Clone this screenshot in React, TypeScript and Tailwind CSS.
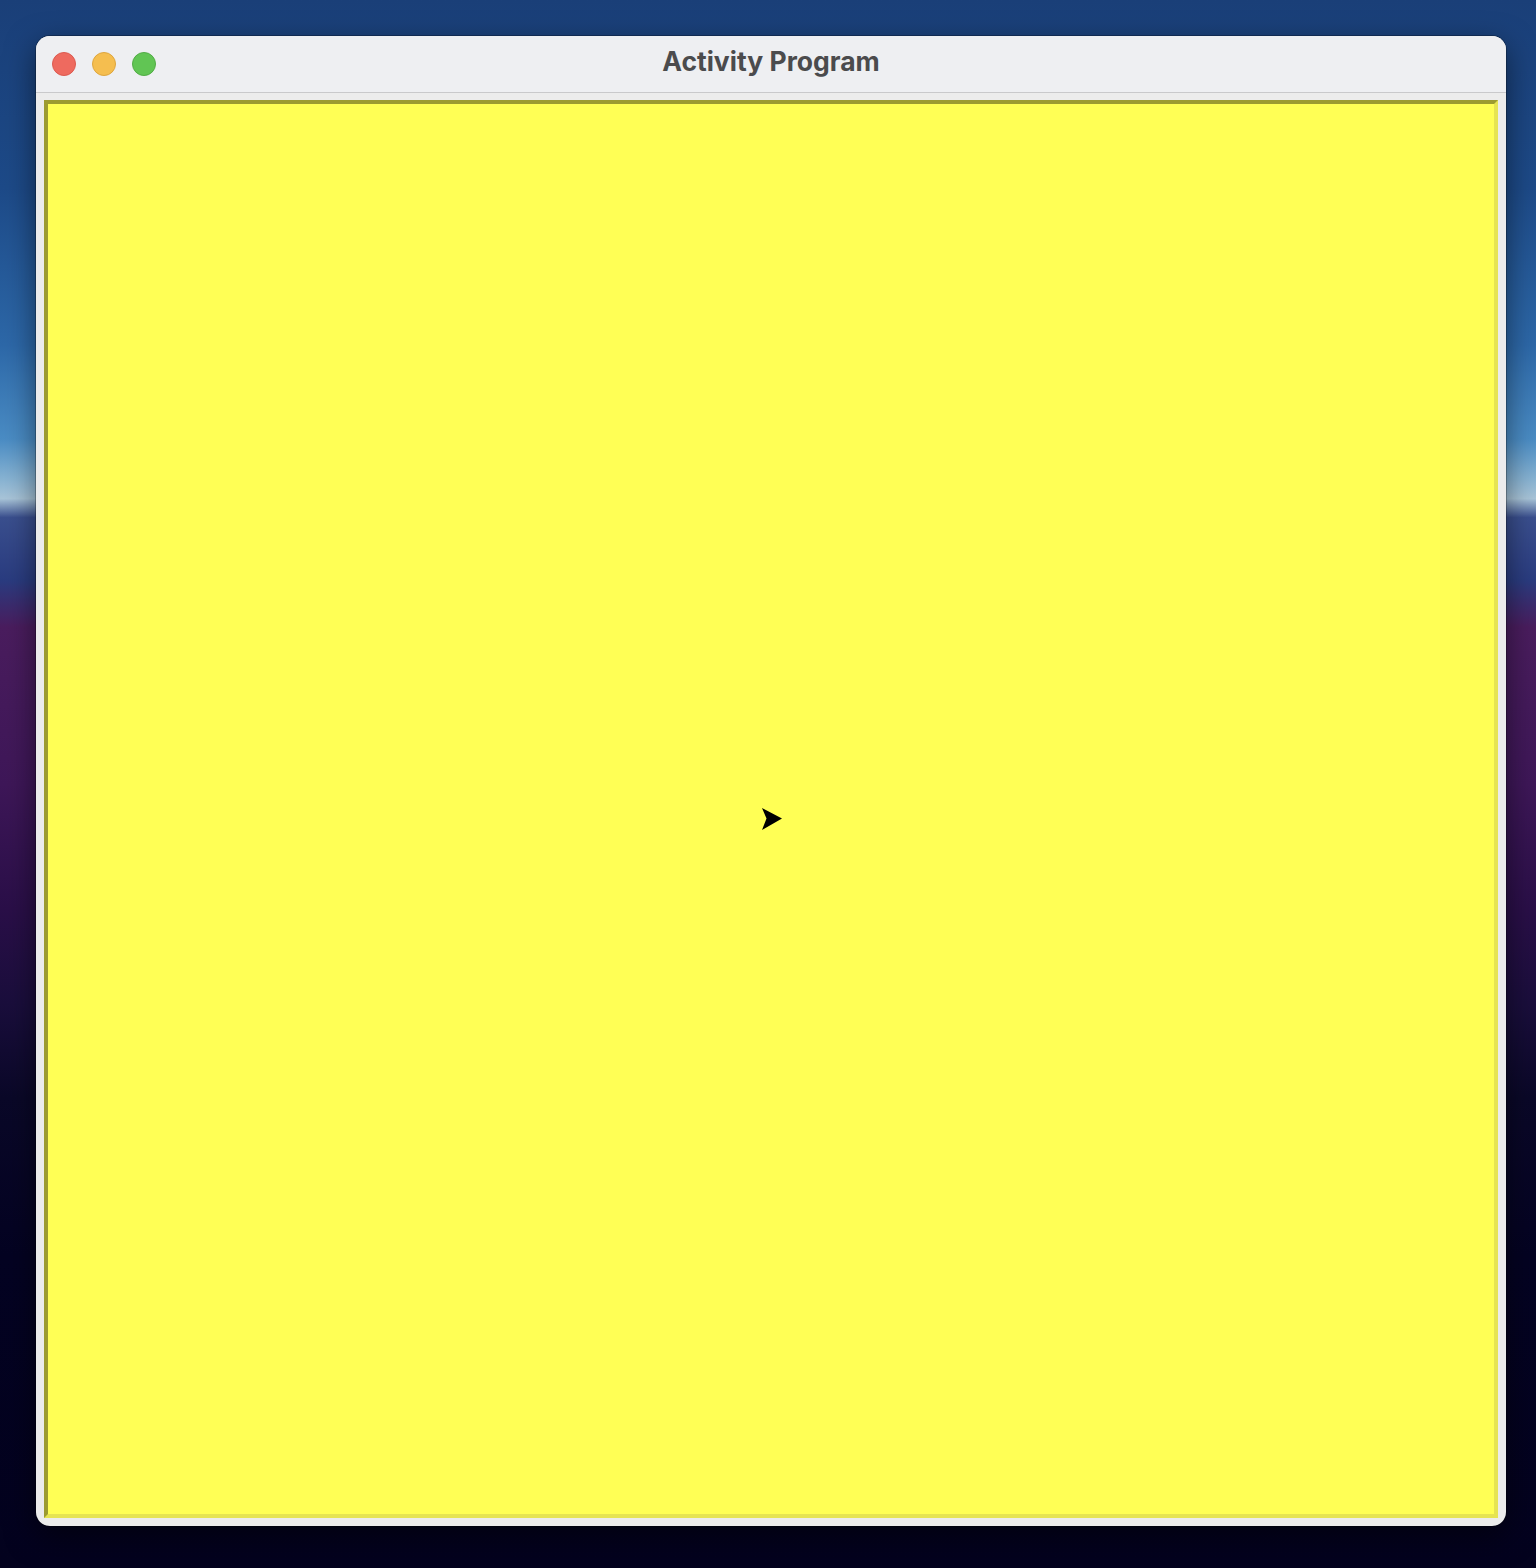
export default function App() {
  return (
    <div className="h-[1568px] w-[1536px] overflow-hidden bg-[linear-gradient(to_bottom,#1a3f78_0%,#1d4a88_12%,#2d68a8_22%,#4a8cc4_28%,#86b2d2_30.5%,#a8c4d8_31.8%,#3a4f8e_33%,#2a3c80_37%,#4a1d5e_40%,#3e1758_50%,#2a0f48_58%,#1a0e3c_64%,#0a0828_70%,#040322_80%,#03021e_100%)] pl-[36px] pt-[36px] font-['Inter','Liberation_Sans',sans-serif]">
      {/* Window */}
      <div className="flex h-[1490px] w-[1470px] flex-col overflow-hidden rounded-[14px] bg-[#ececec] shadow-[0_0_0_1px_rgba(0,0,0,0.25),0_10px_30px_rgba(0,0,0,0.5)]">
        {/* Title bar */}
        <div className="relative flex h-[57px] shrink-0 items-center justify-center border-b border-[#c9c9cb] bg-[#eeeff2]">
          <div className="absolute left-[16px] top-[16px] flex gap-[16px]">
            <span className="h-[24px] w-[24px] rounded-full border border-[#dc5a50] bg-[#ee6a5f]" />
            <span className="h-[24px] w-[24px] rounded-full border border-[#dea63f] bg-[#f5be4f]" />
            <span className="h-[24px] w-[24px] rounded-full border border-[#52ac46] bg-[#61c554]" />
          </div>
          <span className="mb-[4px] text-[26.5px] font-bold text-[#4b4b4d]">
            Activity Program
          </span>
        </div>

        {/* Content */}
        <div className="flex-1 px-[8px] pb-[8px] pt-[7px]">
          <div className="relative h-[1418px] w-[1454px] border-4 border-b-[#e6e452] border-l-[#9c9b30] border-r-[#e6e452] border-t-[#9c9b30] bg-[#ffff55]">
            {/* Turtle */}
            <svg
              className="absolute left-[713px] top-[703px]"
              width="22"
              height="24"
              viewBox="0 0 22 24"
            >
              <polygon points="1,1 21,11.5 1,23 5.5,11.5" fill="#000" />
            </svg>
          </div>
        </div>
      </div>
    </div>
  );
}
